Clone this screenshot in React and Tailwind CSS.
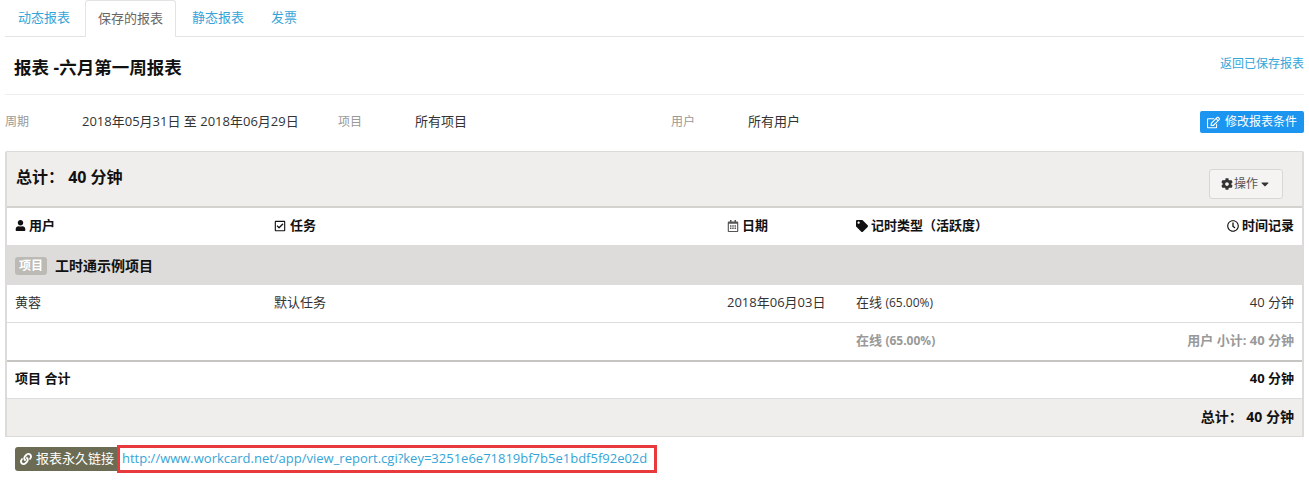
import { FaUser, FaRegCheckSquare, FaRegCalendarAlt, FaTag, FaRegClock, FaLink, FaCog, FaRegEdit, FaCaretDown } from 'react-icons/fa';

const font = "font-['Open_Sans','Noto_Sans_CJK_SC',sans-serif]";
const cols = 'grid grid-cols-[259px_453px_129px_1fr_auto] items-center pl-[8px] pr-[8px] pb-[2px]';

function Th({ icon, children }) {
  return (
    <div className="flex items-center gap-[3px] font-bold text-[13px] text-[#111]">
      {icon}
      <span>{children}</span>
    </div>
  );
}

export default function App() {
  return (
    <div className={`${font} w-[1309px] h-[480px] bg-white text-[13px] text-[#333] overflow-hidden`}>
      <div className="ml-[5px] mr-[5px]">
        {/* tabs */}
        <div className="flex h-[37px] border-b border-[#e4e4e4] text-[13px]">
          <a className="w-[80px] pl-[13px] pt-[8px] text-[#35a5d8]">动态报表</a>
          <a className="w-[91px] -mb-px h-[37px] pl-[12px] pt-[8px] bg-white border border-b-0 border-[#e4e4e4] rounded-t-[3px] text-[#666]">保存的报表</a>
          <a className="w-[80px] pl-[16px] pt-[8px] text-[#35a5d8]">静态报表</a>
          <a className="pl-[15px] pt-[8px] text-[#35a5d8]">发票</a>
        </div>

        {/* title */}
        <div className="flex justify-between h-[58px] border-b border-[#eeeeee]">
          <h1 className="pl-[9px] pt-[17px] text-[17.5px] leading-[26px] font-bold text-[#111]">报表 -六月第一周报表</h1>
          <a className="pt-[18px] text-[12px] leading-[18px] text-[#35a5d8]">返回已保存报表</a>
        </div>

        {/* filters */}
        <div className="flex items-start h-[56px] pt-[16px]">
          <span className="w-[77px] text-[12px] leading-[21px] text-[#999]">周期</span>
          <span className="w-[256px] leading-[20px]">2018年05月31日 至 2018年06月29日</span>
          <span className="w-[77px] text-[12px] leading-[21px] text-[#999]">项目</span>
          <span className="w-[256px] leading-[20px]">所有项目</span>
          <span className="w-[77px] text-[12px] leading-[21px] text-[#999]">用户</span>
          <span className="leading-[20px]">所有用户</span>
          <button className="ml-auto flex items-center gap-[5px] h-[22px] w-[104px] pl-[7px] rounded-[2px] bg-[#1b95ef] text-white text-[12px]">
            <FaRegEdit className="text-[13px]" />
            修改报表条件
          </button>
        </div>

        {/* report panel */}
        <div className="h-[286px] border-2 border-[#dcdbd8] border-t-[1px] bg-[#efeeec] rounded-t-[2px]">
          <div className="flex justify-between h-[54px]">
            <div className="pl-[9px] pt-[13px] text-[16px] leading-[24px] font-bold text-[#111]">
              总计：&nbsp;40 分钟
            </div>
            <button className="mt-[17px] mr-[19px] flex items-center justify-center gap-[1px] w-[74px] h-[30px] rounded-[3px] bg-[#f5f4f2] border border-[#d8d7d4] text-[12px] text-[#555]">
              <FaCog className="text-[12px] text-[#333]" />
              操作
              <FaCaretDown className="text-[12px] text-[#333]" />
            </button>
          </div>

          <div className="bg-white border-t-2 border-[#d3d2cf]">
            <div className={`${cols} h-[37px]`}>
              <Th icon={<FaUser className="text-[11px]" />}>用户</Th>
              <Th icon={<FaRegCheckSquare className="text-[12px] mr-px" />}>任务</Th>
              <Th icon={<FaRegCalendarAlt className="text-[12px] text-[#555]" />}>日期</Th>
              <Th icon={<FaTag className="text-[12px]" />}>记时类型（活跃度）</Th>
              <Th icon={<FaRegClock className="text-[12px]" />}>时间记录</Th>
            </div>

            <div className="flex items-center gap-[8px] h-[40px] pl-[8px] pt-[1px] bg-[#dddcda] font-bold text-[14px] text-[#111]">
              <span className="px-[4px] h-[18px] leading-[18px] rounded-[3px] bg-[#bcbab5] text-white text-[12px]">项目</span>
              工时通示例项目
            </div>

            <div className={`${cols} h-[38px] border-b border-[#dddddd]`}>
              <span>黄蓉</span>
              <span>默认任务</span>
              <span>2018年06月03日</span>
              <span>在线 <span className="text-[12px]">(65.00%)</span></span>
              <span className="text-right">40 分钟</span>
            </div>

            <div className={`${cols} h-[37px] font-bold text-[#999]`}>
              <span />
              <span />
              <span />
              <span>在线 <span className="text-[12px]">(65.00%)</span></span>
              <span className="text-right">用户 小计: 40 分钟</span>
            </div>

            <div className={`${cols} h-[38px] border-t-2 border-[#c6c5c2] font-bold text-[#111]`}>
              <span>项目 合计</span>
              <span />
              <span />
              <span />
              <span className="text-right">40 分钟</span>
            </div>

            <div className="flex items-center justify-end h-[38px] pr-[8px] pb-[3px] bg-[#efeeec] border-t border-[#dddddd] font-bold text-[14px] text-[#111]">
              总计：&nbsp;40 分钟
            </div>
          </div>
        </div>

        {/* permalink */}
        <div className="flex items-center mt-[8px] ml-[10px]">
          <span className="flex items-center gap-[4px] h-[24px] w-[102px] pl-[5px] rounded-l-[3px] bg-[#6c6c54] text-white text-[13px] whitespace-nowrap">
            <FaLink className="text-[12px] shrink-0" />
            报表永久链接
          </span>
          <a className="flex items-center h-[28px] w-[540px] pl-[2px] border-[3px] border-[#e8393c] text-[13px] text-[#35a5d8] whitespace-nowrap">
            http://www.workcard.net/app/view_report.cgi?key=3251e6e71819bf7b5e1bdf5f92e02d
          </a>
        </div>
      </div>
    </div>
  );
}
